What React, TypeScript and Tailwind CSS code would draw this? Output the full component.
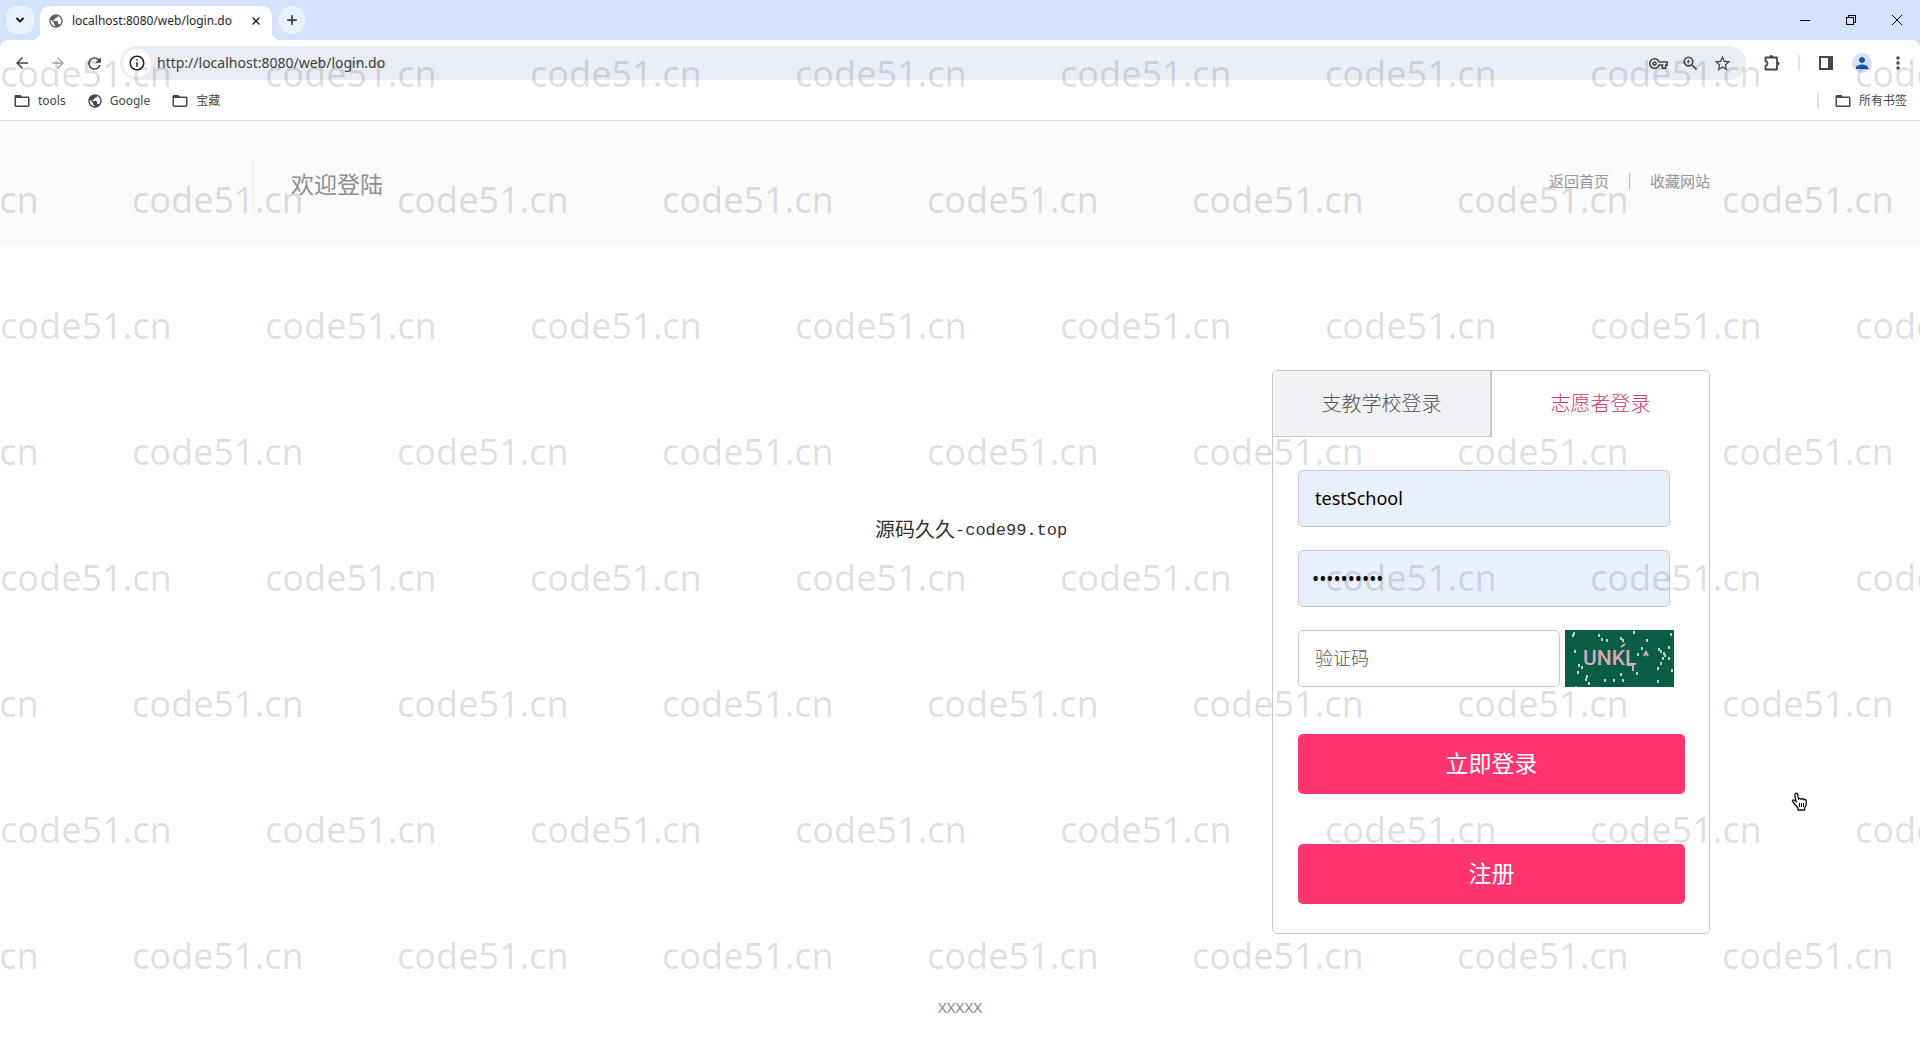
import type { ReactNode } from "react";
import {
  MdArrowBack,
  MdArrowForward,
  MdFolderOpen,
  MdInfoOutline,
  MdMoreVert,
  MdOutlineVpnKey,
  MdPerson,
  MdPublic,
  MdRefresh,
  MdStarBorder,
  MdZoomIn,
} from "react-icons/md";
import { ChevronDown, Plus, X } from "lucide-react";

const watermarkRows = [0, 1, 2, 3, 4, 5, 6, 7];
const watermarkCells = [0, 1, 2, 3, 4, 5, 6, 7];

// noise dots of the captcha, [x, y]
const dots = [
  [8, 2], [7, 4], [33, 4], [36, 8], [41, 9], [55, 7], [57, 9], [68, 1], [105, 3],
  [81, 9], [9, 20], [76, 17], [72, 23], [93, 18], [95, 20], [98, 22], [99, 24], [103, 16],
  [103, 27], [97, 27], [95, 32], [92, 37], [106, 39], [92, 50], [13, 34], [16, 36], [12, 41],
  [21, 45], [20, 48], [23, 52], [39, 49], [48, 49], [57, 49], [55, 43], [71, 42], [10, 56],
];

function IconButton({ label, className = "", children }: { label: string; className?: string; children: ReactNode }) {
  return (
    <button aria-label={label} className={`flex h-7 w-7 shrink-0 items-center justify-center rounded-full ${className}`}>
      {children}
    </button>
  );
}

function TabStrip() {
  return (
    <div className="flex h-10 items-end bg-[#d3e3fd]">
      <button
        aria-label="Search tabs"
        className="mb-[6px] ml-[6px] flex h-7 w-7 items-center justify-center rounded-[10px] bg-[#eaf1fe] text-[#1f1f1f]"
      >
        <ChevronDown className="h-3 w-3" strokeWidth={4} />
      </button>
      <div className="relative ml-[6px] flex h-[34px] w-[232px] items-center rounded-t-[10px] bg-white px-2 pb-1">
        <span className="absolute bottom-0 -left-2 h-2 w-2 bg-[radial-gradient(circle_at_0_0,#d3e3fd_8px,#ffffff_8px)]" />
        <span className="absolute -right-2 bottom-0 h-2 w-2 bg-[radial-gradient(circle_at_100%_0,#d3e3fd_8px,#ffffff_8px)]" />
        <MdPublic className="h-4 w-4 text-[#5f6368]" />
        <span className="ml-2 flex-1 text-xs whitespace-nowrap text-[#1f1f1f]">localhost:8080/web/login.do</span>
        <button aria-label="Close tab" className="flex h-4 w-4 items-center justify-center text-[#1f1f1f]">
          <X className="h-3 w-3" strokeWidth={3} />
        </button>
      </div>
      <IconButton label="New tab" className="mb-[6px] ml-[6px] bg-[#eaf1fe] text-[#3c4043]">
        <Plus className="h-[14px] w-[14px]" strokeWidth={3} />
      </IconButton>
      <div className="ml-auto flex h-10">
        <button aria-label="Minimize" className="flex w-[46px] items-center justify-center">
          <svg viewBox="0 0 10 10" className="h-[10px] w-[10px]" shapeRendering="crispEdges">
            <path d="M0 5.5h10" stroke="#000" fill="none" />
          </svg>
        </button>
        <button aria-label="Restore" className="flex w-[46px] items-center justify-center">
          <svg viewBox="0 0 10 10" className="h-[10px] w-[10px]" shapeRendering="crispEdges">
            <path d="M.5 2.5h7v7h-7zM2.5 2.5v-2h7v7h-2" stroke="#000" fill="none" />
          </svg>
        </button>
        <button aria-label="Close" className="flex w-[46px] items-center justify-center">
          <svg viewBox="0 0 10 10" className="h-[10px] w-[10px]">
            <path d="M0 0l10 10M10 0L0 10" stroke="#000" fill="none" />
          </svg>
        </button>
      </div>
    </div>
  );
}

function Toolbar() {
  return (
    <div className="bg-[#d3e3fd]">
      <div className="flex h-[46px] items-center rounded-t-lg bg-white px-2 text-[#474747]">
        <div className="flex gap-2">
          <IconButton label="Back">
            <MdArrowBack className="h-[18px] w-[18px]" />
          </IconButton>
          <IconButton label="Forward" className="text-[#a8a8a8]">
            <MdArrowForward className="h-[18px] w-[18px]" />
          </IconButton>
          <IconButton label="Reload">
            <MdRefresh className="h-[19px] w-[19px]" />
          </IconButton>
        </div>
        <div className="mx-3 flex h-[34px] flex-1 items-center gap-2 rounded-full bg-[#e9edf6] pr-3 pl-[3px]">
          <IconButton label="Site information" className="bg-white text-[#1f1f1f]">
            <MdInfoOutline className="h-[18px] w-[18px]" />
          </IconButton>
          <input
            aria-label="Address"
            defaultValue="http://localhost:8080/web/login.do"
            className="-ml-[2px] min-w-0 flex-1 bg-transparent text-sm text-[#3c4043] outline-none"
          />
          <button aria-label="Passwords" className="flex w-6 justify-center">
            <MdOutlineVpnKey className="h-[19px] w-[19px]" />
          </button>
          <button aria-label="Zoom" className="flex w-6 justify-center">
            <MdZoomIn className="h-[19px] w-[19px]" />
          </button>
          <button aria-label="Bookmark" className="flex w-6 justify-center">
            <MdStarBorder className="h-[19px] w-[19px]" />
          </button>
        </div>
        <IconButton label="Extensions">
          <svg viewBox="0 0 18 18" className="h-[18px] w-[18px]">
            <path
              d="M2.500 3.500h11.500v12H2.500v-3.700c2.600-.4 2.600-4.200 0-4.600z"
              fill="none"
              stroke="currentColor"
              strokeWidth="1.800"
              strokeLinejoin="round"
            />
            <path d="M6.300 3a2 2 0 0 1 4 0zM14.500 7.500a2 2 0 0 1 0 4z" fill="currentColor" />
          </svg>
        </IconButton>
        <span className="mx-3 h-4 w-[2px] bg-[#dde5f3]" />
        <div className="flex gap-2">
          <IconButton label="Side panel">
            <svg viewBox="0 0 14 14" className="h-[14px] w-[14px]">
              <path d="M1 1h12v12H1z" fill="none" stroke="currentColor" strokeWidth="2" />
              <path d="M9 1h4v12H9z" fill="currentColor" />
            </svg>
          </IconButton>
          <IconButton label="Profile">
            <span className="flex h-5 w-5 items-center justify-center rounded-full bg-[#d3e3fd] text-[#1a56ab]">
              <MdPerson className="h-[18px] w-[18px]" />
            </span>
          </IconButton>
          <IconButton label="Menu">
            <MdMoreVert className="h-[20px] w-[20px]" />
          </IconButton>
        </div>
      </div>
    </div>
  );
}

function BookmarkBar() {
  return (
    <nav className="flex h-[35px] items-center border-b border-[#dedede] bg-white px-[13px] pb-1 text-xs leading-4 text-[#474747]">
      <a href="#tools" className="flex items-center gap-[7px]">
        <MdFolderOpen className="h-[18px] w-[18px]" />
        tools
      </a>
      <a href="#google" className="ml-[21px] flex items-center gap-[7px]">
        <MdPublic className="h-4 w-4" />
        Google
      </a>
      <a href="#treasure" className="ml-[21px] flex items-center gap-[7px]">
        <MdFolderOpen className="h-[18px] w-[18px]" />
        宝藏
      </a>
      <a href="#all" className="ml-auto flex items-center gap-[7px]">
        <span className="mr-2 h-4 w-[2px] bg-[#dde5f3]" />
        <MdFolderOpen className="h-[18px] w-[18px]" />
        所有书签
      </a>
    </nav>
  );
}

function Captcha() {
  return (
    <svg viewBox="0 0 109 57" className="h-[57px] w-[109px]" role="img" aria-label="UNKL">
      <rect width="109" height="57" fill="#095c45" />
      <text x="18" y="35" fontFamily="Roboto, sans-serif" fontSize="21" fontWeight="500" fill="#dba9b4">
        UNKL
      </text>
      <path d="M62 35h6v6M79 26l2-4 2 4M56 17l4-3" stroke="#dba9b4" strokeWidth="2" fill="none" />
      {dots.map(([x, y]) => (
        <rect key={`${x}-${y}`} x={x} y={y} width="2" height="3" fill="#b9d3c0" />
      ))}
    </svg>
  );
}

function LoginCard() {
  return (
    <section className="w-[438px] rounded-[5px] border border-[#c8c8cb] pb-[29px]">
      <div className="flex h-[66px] text-xl font-light">
        <button className="w-[219px] rounded-tl-[4px] border-r-2 border-b border-[#c8c8cb] bg-[#f0f2f5] text-[#555555]">
          支教学校登录
        </button>
        <button className="flex-1 text-[#d13a6c]">志愿者登录</button>
      </div>
      <form className="flex flex-col pt-[33px] pr-6 pl-[25px]" onSubmit={(e) => e.preventDefault()}>
        <input
          aria-label="用户名"
          defaultValue="testSchool"
          className="h-[57px] w-[372px] rounded-[5px] border border-[#c3c9d3] bg-[#e8f0fe] px-4 pb-[2px] text-lg text-black"
        />
        <input
          type="password"
          aria-label="密码"
          defaultValue="0123456789"
          className="mt-[23px] h-[57px] w-[372px] rounded-[5px] border border-[#c3c9d3] bg-[#e8f0fe] px-[13px] text-[19px] text-black"
        />
        <div className="mt-[23px] flex gap-[5px]">
          <input
            aria-label="验证码"
            placeholder="验证码"
            className="h-[57px] w-[262px] rounded-[5px] border border-[#c8c8cb] px-4 pb-[2px] text-lg placeholder:font-light placeholder:text-[#555555]"
          />
          <Captcha />
        </div>
        <button className="mt-[47px] h-[60px] rounded-[5px] bg-[#ff3570] pb-[2px] text-[23px] text-white">立即登录</button>
        <button type="button" className="mt-[50px] h-[60px] rounded-[5px] bg-[#ff3570] pb-[2px] text-[23px] text-white">
          注册
        </button>
      </form>
    </section>
  );
}

function Watermark() {
  return (
    <div aria-hidden="true" className="pointer-events-none absolute inset-0 overflow-hidden pt-[11px]">
      {watermarkRows.map((row) => (
        <div key={row} className={row % 2 ? "-ml-[133px] flex" : "flex"}>
          {watermarkCells.map((cell) => (
            <span
              key={cell}
              className="w-[265px] shrink-0 font-['Noto_Sans',sans-serif] text-4xl leading-[126px] text-black/13"
            >
              code51.cn
            </span>
          ))}
        </div>
      ))}
    </div>
  );
}

export default function App() {
  return (
    <div className="relative min-h-screen overflow-hidden bg-white font-['Noto_Sans','Noto_Sans_CJK_SC',sans-serif]">
      <TabStrip />
      <Toolbar />
      <BookmarkBar />

      <header className="bg-[#fafafa]">
        <div className="mx-auto flex h-[125px] max-w-[1500px] items-start justify-between pt-[39px] pl-[43px]">
          <h1 className="h-[52px] border-l border-[#e9e9e9] pl-[37px] text-[23px] leading-[48px] text-[#8f8f8f]">
            欢迎登陆
          </h1>
          <div className="flex h-[42px] items-center text-[15px] text-[#969696]">
            <a href="#home">返回首页</a>
            <span className="mx-5 h-4 w-px bg-[#b5b5b5]" />
            <a href="#favorite">收藏网站</a>
          </div>
        </div>
      </header>

      <main className="mx-auto flex max-w-[1500px] justify-end pt-[124px]">
        <LoginCard />
      </main>

      <footer className="pt-[63px] pb-5 text-center text-[15px] leading-5 text-[#888888]">XXXXX</footer>

      <p className="absolute top-[514px] left-[875px] flex items-center text-xl leading-[30px] text-[#333333]">
        源码久久
        <span className="pt-[2px] font-['Liberation_Mono',monospace] text-[17px]">-code99.top</span>
      </p>

      <Watermark />

      {/* hand pointer */}
      <svg viewBox="0 0 18 20" className="absolute top-[792px] left-[1791px] h-5 w-[18px]">
        <path
          d="M4.500 1.500c1-.6 2 0 2.200 1L7.500 7l1-.7 1.500.9 1.400-.6 1.300 1 1.500-.3 1 1.200v4.500l-1.500 3v2H7v-2l-3-3.500-2.500-3c-.5-1 .5-2 1.500-1.500L5 9.500l-1.200-6.500c-.1-.6.200-1.200.7-1.500z"
          fill="#fff"
          stroke="#111"
          strokeWidth="1.300"
        />
        <path d="M8.500 11v4M10.500 11v4M12.500 11v4" stroke="#111" fill="none" />
      </svg>
    </div>
  );
}
